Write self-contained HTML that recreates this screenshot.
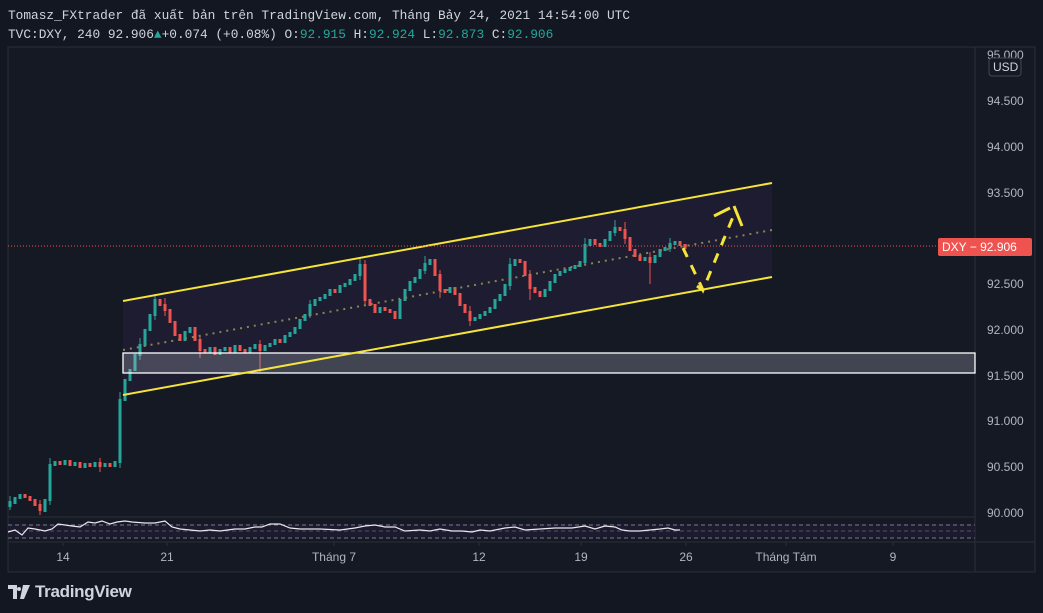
<!DOCTYPE html>
<html><head><meta charset="utf-8"><style>
html,body{margin:0;padding:0;background:#131722;width:1043px;height:613px;overflow:hidden;font-family:"Liberation Mono","DejaVu Sans Mono",monospace}
.h{position:absolute;left:8px;font-size:12.8px;color:#d1d4dc;white-space:nowrap}
.g{color:#26a69a}
#c{position:absolute;left:0;top:0}
.logo{position:absolute;left:8px;top:582px;font-family:"Liberation Sans",sans-serif;font-size:17px;color:#d1d4dc;font-weight:bold;letter-spacing:-0.3px;display:flex;align-items:center}
</style></head><body>
<div class="h" style="top:8px">Tomasz_FXtrader đã xuất bản trên TradingView.com, Tháng Bảy 24, 2021 14:54:00 UTC</div>
<div class="h" style="top:27px">TVC:DXY, 240 92.906<span class="g">▲</span>+0.074 (+0.08%) O:<span class="g">92.915</span> H:<span class="g">92.924</span> L:<span class="g">92.873</span> C:<span class="g">92.906</span></div>
<svg id="c" width="1043" height="613" xmlns="http://www.w3.org/2000/svg" font-family="Liberation Sans, sans-serif">
<rect x="8" y="47" width="1027" height="525" fill="#151924" stroke="#2a2e39"/>
<line x1="975" y1="47" x2="975" y2="572" stroke="#2a2e39"/>
<line x1="8" y1="517" x2="975" y2="517" stroke="#2a2e39"/>
<line x1="8" y1="542" x2="1035" y2="542" stroke="#2a2e39"/>
<polygon points="123,301 772,183 772,277 123,395" fill="#1d1c30"/>
<rect x="8" y="524" width="967" height="14" fill="#1c1a2e"/>
<line x1="8" y1="525" x2="975" y2="525" stroke="#787b86" stroke-dasharray="4,3"/>
<line x1="8" y1="531" x2="975" y2="531" stroke="#787b86" stroke-dasharray="4,3" opacity=".6"/>
<line x1="8" y1="538" x2="975" y2="538" stroke="#787b86" stroke-dasharray="4,3"/>
<g fill="none" stroke-width="3">
<path stroke="#26a69a" d="M10 507V501M15 504V497M20 499V494M45 512V499M50 501V464M55 466V461M65 465V460M75 466V462M85 468V463M95 467V462M105 467V463M115 467V461M120 463V399M125 401V379M130 381V369M135 371V354M140 356V344M145 346V329M150 331V314M155 316V299M185 341V331M190 333V327M210 353V347M220 355V349M225 351V347M235 353V345M250 353V347M255 349V344M265 351V345M270 347V343M275 345V339M285 343V335M290 337V332M295 334V327M300 329V319M305 321V314M310 316V304M315 306V299M320 301V297M325 299V294M330 296V289M340 293V285M345 287V283M350 285V279M355 281V274M360 276V264M380 313V307M400 319V299M405 301V289M410 291V281M415 283V277M420 279V269M425 271V263M430 265V259M450 293V287M475 321V317M480 319V314M485 316V311M490 313V307M495 309V299M500 301V294M505 296V284M510 286V264M515 266V259M545 297V289M550 291V281M555 283V274M560 276V271M565 273V269M570 271V267M575 269V265M580 267V261M585 263V244M590 246V239M605 247V239M610 241V231M615 233V227M645 261V257M655 263V255M660 257V249M665 251V247M670 249V243M675 245V241"/>
<path stroke="#ef5350" d="M25 494V498M30 496V501M35 499V506M40 504V511M60 461V465M70 460V466M80 462V468M90 463V467M100 462V467M110 463V467M160 299V306M165 304V311M170 309V323M175 321V336M180 334V341M195 327V341M200 339V351M205 349V353M215 347V355M230 347V353M240 345V351M245 349V353M260 344V351M280 339V343M335 289V293M365 264V301M370 299V306M375 304V313M385 307V311M390 309V313M395 311V319M435 259V276M440 274V291M445 289V293M455 287V295M460 293V306M465 304V313M470 311V321M520 259V263M525 261V276M530 274V289M535 287V293M540 291V297M595 239V245M600 243V247M620 227V231M625 229V239M630 237V251M635 249V257M640 255V261M650 257V263M680 241V246M685 244V249"/>
</g>
<g fill="none" stroke-width="1">
<path stroke="#26a69a" d="M10 510V496M50 505V458M120 468V392M140 360V338M155 320V294M310 318V300M360 280V258M425 274V256M510 290V258M585 266V238M615 236V220M670 252V238"/>
<path stroke="#ef5350" d="M40 500V515M100 458V472M165 298V316M200 335V358M260 340V372M365 260V306M440 270V298M470 306V326M530 270V300M625 222V244M650 252V284"/>
</g>
<rect x="123" y="353" width="852" height="20" fill="rgba(200,200,215,0.25)" stroke="#fff" stroke-width="1.3"/>
<line x1="123" y1="350" x2="772" y2="230" stroke="#8a8450" stroke-width="2" stroke-dasharray="2,5"/>
<line x1="123" y1="301" x2="772" y2="183" stroke="#f5e43a" stroke-width="2"/>
<line x1="123" y1="395" x2="772" y2="277" stroke="#f5e43a" stroke-width="2"/>
<line x1="8" y1="246" x2="938" y2="246" stroke="#ef5350" stroke-dasharray="1,2"/>
<g stroke="#f5e43a" stroke-width="3" fill="none" stroke-dasharray="10,9">
<polyline points="683,248 703,290 735,212"/>
</g>
<g stroke="#f5e43a" stroke-width="3"><line x1="714" y1="216" x2="730" y2="208"/><line x1="734" y1="206" x2="742" y2="226"/><line x1="697" y1="286" x2="704" y2="291"/></g>
<g fill="#b2b5be" font-size="12">
<text x="987" y="59">95.000</text><text x="987" y="105">94.500</text><text x="987" y="151">94.000</text><text x="987" y="197">93.500</text>
<text x="987" y="288">92.500</text><text x="987" y="334">92.000</text><text x="987" y="380">91.500</text><text x="987" y="425">91.000</text><text x="987" y="471">90.500</text><text x="987" y="517">90.000</text>
</g>
<rect x="989" y="58" width="32" height="18" rx="3" fill="#151924" stroke="#434651"/>
<text x="993" y="71" fill="#d1d4dc" font-size="12">USD</text>
<rect x="938" y="238" width="94" height="18" fill="#ef5350" rx="2"/>
<text x="942" y="251" fill="#fff" font-size="12">DXY  − 92.906</text>
<g stroke="#2a2e39"><path d="M63 542v4M167 542v4M334 542v4M479 542v4M581 542v4M686 542v4M786 542v4M893 542v4"/></g>
<g fill="#b2b5be" font-size="12" text-anchor="middle">
<text x="63" y="561">14</text><text x="167" y="561">21</text><text x="334" y="561">Tháng 7</text><text x="479" y="561">12</text><text x="581" y="561">19</text><text x="686" y="561">26</text><text x="786" y="561">Tháng Tám</text><text x="893" y="561">9</text>
</g>
<polyline fill="none" stroke="#e8e8ee" stroke-width="1.2" points="8,532 15,530 22,535 28,528 35,529 45,531 52,529 58,524 65,525 72,526 80,527 88,522 95,523 102,521 110,524 117,522 125,521 132,522 145,523 155,523 165,521 172,527 180,529 190,530 200,531 210,530 220,531 235,529 245,529 255,527 262,527 270,524 280,524 290,528 300,529 320,529 340,530 355,528 365,526 375,525 385,527 395,527 405,531 420,530 430,531 440,529 452,531 462,531 472,532 480,530 490,531 505,528 515,527 525,530 540,529 555,528 572,528 585,526 595,529 605,526 615,527 622,530 630,531 640,531 650,530 660,529 668,528 675,530 680,530"/>
</svg>
<div class="logo"><svg width="22" height="14" viewBox="0 0 22 14"><path d="M0 0h9v14H5V4H0z" fill="#d1d4dc"/><circle cx="11" cy="4" r="2" fill="#d1d4dc"/><path d="M15 0h7l-6 14h-4z" fill="#d1d4dc"/></svg><span style="margin-left:5px">TradingView</span></div>
</body></html>
